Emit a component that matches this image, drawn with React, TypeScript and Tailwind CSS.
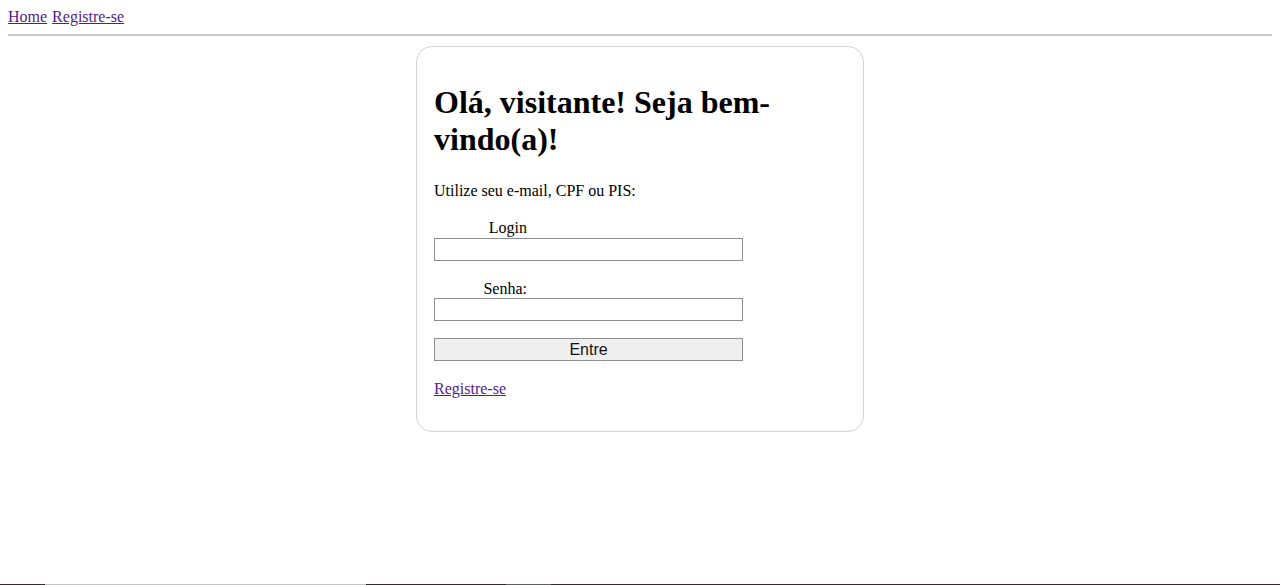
import React from "react";

export default function App() {
  const serif = { fontFamily: '"Liberation Serif", "Times New Roman", serif' };
  return (
    <div className="min-h-[585px] flex flex-col bg-white text-black" style={serif}>
      <div className="flex-1 m-2 mb-0">
        <nav className="text-[16px] leading-[18px] flex gap-[5px]">
          <a href="#" className="text-[#551a8b] underline">Home</a>
          <a href="#" className="text-[#551a8b] underline">Registre-se</a>
        </nav>
        <div className="mt-[8px] mb-[10px] h-0 border-t-2 border-[#c8c8c8]" />
        <div className="mx-auto w-[448px] border border-[#d4d4d4] rounded-[16px] px-[17px] pt-[16px] pb-[33px]">
          <h1 className="text-[32px] font-bold leading-[37px] mt-[21px] mb-[24px] pr-[40px]">
            Olá, visitante! Seja bem-vindo(a)!
          </h1>
          <p className="text-[16px] leading-[18px] mb-[19px]">Utilize seu e-mail, CPF ou PIS:</p>
          <label className="block w-[93px] text-right text-[16px] leading-[18px] mb-[1px]">Login</label>
          <input className="block w-[309px] h-[23px] border border-[#8f8f8f] bg-white" />
          <label className="block w-[93px] text-right text-[16px] leading-[18px] mt-[19px] mb-0">Senha:</label>
          <input type="password" className="block w-[309px] h-[23px] border border-[#8f8f8f] bg-white" />
          <button
            className="block mt-[17px] w-[309px] h-[23px] border border-[#8f8f8f] bg-[#efefef] text-[16px] leading-[19px] text-[#111]"
            style={{ fontFamily: '"Liberation Sans", Arial, sans-serif' }}
          >
            Entre
          </button>
          <a href="#" className="block mt-[19px] text-[16px] leading-[18px] text-[#551a8b] underline w-fit">Registre-se</a>
        </div>
      </div>
      <div className="h-px flex">
        <div className="w-[45px] bg-[#3a2530]" />
        <div className="w-[321px] bg-[#c4c4c4]" />
        <div className="w-[140px] bg-[#3a2530]" />
        <div className="w-[45px] bg-[#6a5a62]" />
        <div className="flex-1 bg-[#3a2530]" />
      </div>
    </div>
  );
}
